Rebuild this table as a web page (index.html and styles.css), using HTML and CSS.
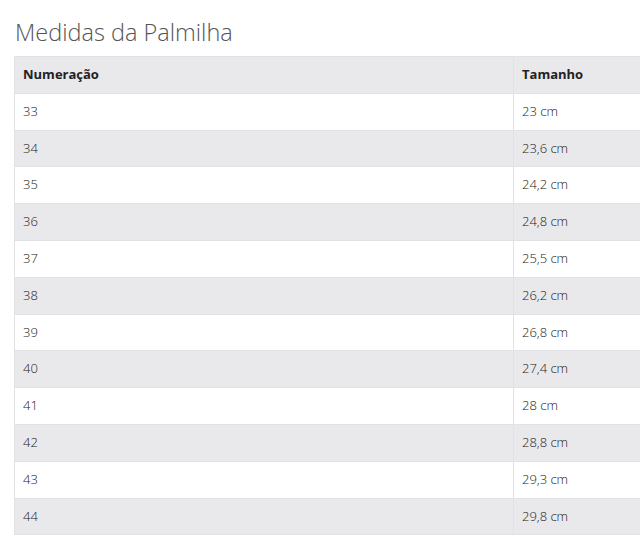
FILE: index.html
```html
<!DOCTYPE html>
<html lang="pt-BR">
<head>
<meta charset="utf-8">
<title>Medidas da Palmilha</title>
<link rel="stylesheet" href="styles.css">
</head>
<body>
<div class="page">
  <h2 class="title">Medidas da Palmilha</h2>
  <table class="sizes">
    <thead>
      <tr><th class="col-num">Numeração</th><th>Tamanho</th></tr>
    </thead>
    <tbody>
      <tr><td>33</td><td>23 cm</td></tr>
      <tr><td>34</td><td>23,6 cm</td></tr>
      <tr><td>35</td><td>24,2 cm</td></tr>
      <tr><td>36</td><td>24,8 cm</td></tr>
      <tr><td>37</td><td>25,5 cm</td></tr>
      <tr><td>38</td><td>26,2 cm</td></tr>
      <tr><td>39</td><td>26,8 cm</td></tr>
      <tr><td>40</td><td>27,4 cm</td></tr>
      <tr><td>41</td><td>28 cm</td></tr>
      <tr><td>42</td><td>28,8 cm</td></tr>
      <tr><td>43</td><td>29,3 cm</td></tr>
      <tr><td>44</td><td>29,8 cm</td></tr>
    </tbody>
  </table>
</div>
</body>
</html>
```
FILE: styles.css
```css
html, body {
  margin: 0;
  padding: 0;
  background: #fff;
  overflow: hidden;
}
body {
  font-family: "Open Sans", "Liberation Sans", sans-serif;
  color: #333;
}
.page {
  padding: 16px 0 0 14px;
}
.title {
  margin: 0 0 8px 1px;
  font-size: 23.5px;
  font-weight: 300;
  line-height: 32px;
  color: #555;
}
.sizes {
  width: 700px;
  border-collapse: collapse;
  font-size: 13px;
}
.sizes th, .sizes td {
  border: 1px solid #e2e1e4;
  padding: 8px 8px;
  line-height: 19.8px;
  text-align: left;
}
.sizes th {
  font-weight: 700;
  color: #222;
  background: #e9e8eb;
}
.sizes td {
  font-weight: 300;
  color: #222;
}
.sizes .col-num {
  width: 482px;
}
.sizes tbody tr:nth-child(even) td {
  background: #e9e8eb;
}
```
